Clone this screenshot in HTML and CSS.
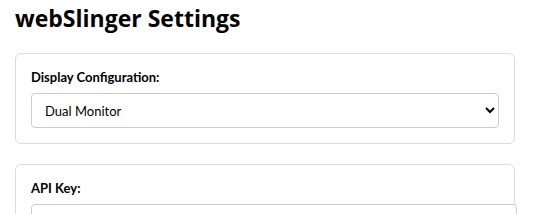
FILE: index.html
```html
<!DOCTYPE html>
<html lang="en">
<head>
  <meta charset="UTF-8">
  <meta name="viewport" content="width=device-width, initial-scale=1.0">
  <title>webSlinger Settings</title>
  <link rel="stylesheet" href="styles.css">
</head>
<body>
  <h1>webSlinger Settings</h1>

  <div class="setting-group">
    <label for="display">Display Configuration:</label>
    <select id="display">
      <option value="single">Single Monitor</option>
      <option value="dual" selected>Dual Monitor</option>
    </select>
  </div>

  <div class="setting-group">
    <label for="apikey">API Key:</label>
    <input type="text" id="apikey" />
  </div>
</body>
</html>
```

FILE: styles.css
```css
body {
  font-family: Lato, 'Open Sans', sans-serif;
  max-width: 500px;
  margin: 0;
  padding: 6px 15px 15px;
  color: #000;
  background-color: #fff;
}

h1 {
  font-family: 'Open Sans', sans-serif;
  font-size: 23px;
  font-weight: bold;
  margin: 0 0 23px;
  line-height: 24px;
}

.setting-group {
  border: 1px solid #ddd;
  border-radius: 6px;
  padding: 15px;
  margin-bottom: 20px;
}

label {
  display: block;
  font-size: 13px;
  font-weight: bold;
  margin-bottom: 8px;
}

select {
  display: block;
  width: 100%;
  height: 35px;
  padding: 0 9px;
  font-family: inherit;
  font-size: 13px;
  border: 1px solid #ccc;
  border-radius: 4px;
  background-color: #fff;
  color: #000;
}

input {
  display: block;
  width: 100%;
  padding: 8px;
  font-family: inherit;
  font-size: 14px;
  border: 1px solid #ccc;
  border-radius: 4px;
}
```
